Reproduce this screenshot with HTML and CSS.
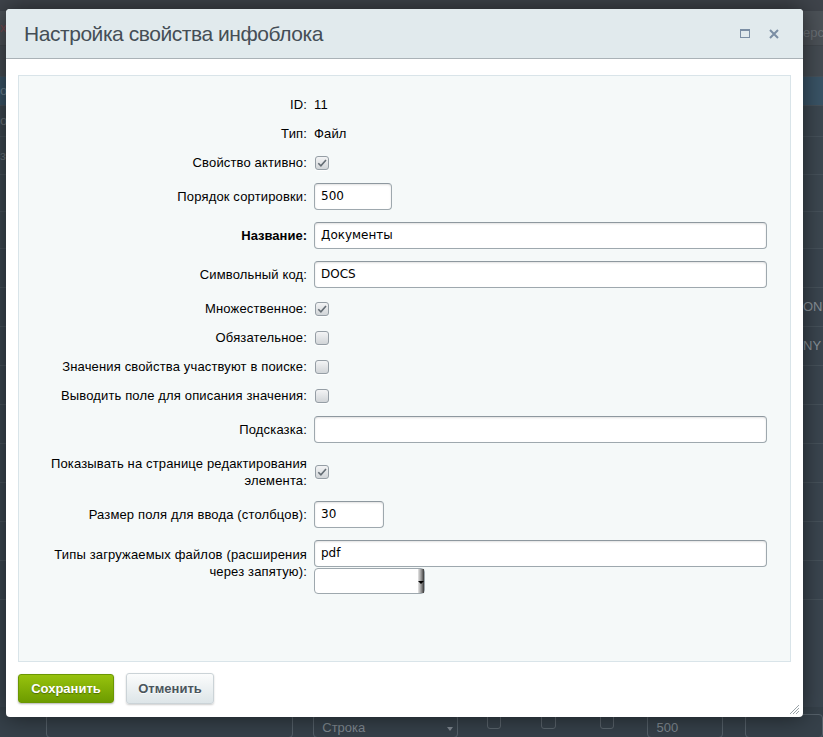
FILE: index.html
```html
<!DOCTYPE html>
<html lang="ru">
<head>
<meta charset="utf-8">
<title>Настройка свойства инфоблока</title>
<link rel="stylesheet" href="styles.css">
</head>
<body>
<div class="backdrop">
  <div class="bd-row bd-top"></div>
  <div class="bd-row bd-band"><span class="bd-x">x</span><span class="bd-ver">ерс</span></div>
  <div class="bd-row bd-r1"></div>
  <div class="bd-row bd-blue"><span class="bd-o">о</span></div>
  <div class="bd-row bd-r2"><span class="bd-o2">о</span></div>
  <div class="bd-row bd-r3"><span class="bd-o3">з</span></div>
  <div class="bd-row bd-r4"></div>
  <div class="bd-row bd-r4"></div>
  <div class="bd-row bd-r5"></div>
  <div class="bd-row bd-r5"><span class="bd-on">ON</span></div>
  <div class="bd-row bd-r5"><span class="bd-on">NY</span></div>
  <div class="bd-row bd-r5"></div>
  <div class="bd-row bd-r5"></div>
  <div class="bd-row bd-r5"></div>
  <div class="bd-row bd-r5"></div>
  <div class="bd-row bd-r5"></div>
  <div class="bd-row bd-r5"></div>
  <div class="bd-spacer"></div>
  <div class="bd-bottom">
    <div class="bd-field bd-f1"></div>
    <div class="bd-field bd-f2"><span>Строка</span><i class="bd-arrow"></i></div>
    <div class="bd-cb bd-cb1"></div>
    <div class="bd-cb bd-cb2"></div>
    <div class="bd-cb bd-cb3"></div>
    <div class="bd-field bd-f3"><span>500</span></div>
    <div class="bd-field bd-f4"></div>
  </div>
</div>

<div class="dialog">
  <div class="dlg-head">
    <span class="dlg-title">Настройка свойства инфоблока</span>
    <span class="dlg-icons">
      <svg class="ico-max" width="11" height="10" viewBox="0 0 11 10"><rect x="0.5" y="0.5" width="9" height="8" fill="none" stroke="#7b8ea4" stroke-width="1"/><line x1="0" y1="1" x2="10" y2="1" stroke="#7b8ea4" stroke-width="2"/></svg>
      <svg class="ico-close" width="10" height="10" viewBox="0 0 10 10"><path d="M1 1 L9 9 M9 1 L1 9" stroke="#7b8ea4" stroke-width="2"/></svg>
    </span>
  </div>
  <div class="dlg-body">
    <div class="panel">
      <div class="form">
        <div class="lbl">ID:</div><div class="val">11</div>
        <div class="lbl">Тип:</div><div class="val">Файл</div>
        <div class="lbl">Свойство активно:</div><div class="val"><span class="cb checked"><svg width="14" height="14" viewBox="0 0 14 14"><path d="M3.3 7.2 L5.9 9.8 L11 4" fill="none" stroke="#646d74" stroke-width="1.6"/></svg></span></div>
        <div class="lbl">Порядок сортировки:</div><div class="val"><div class="inp w77">500</div></div>
        <div class="lbl bold">Название:</div><div class="val"><div class="inp">Документы</div></div>
        <div class="lbl">Символьный код:</div><div class="val"><div class="inp">DOCS</div></div>
        <div class="lbl">Множественное:</div><div class="val"><span class="cb checked"><svg width="14" height="14" viewBox="0 0 14 14"><path d="M3.3 7.2 L5.9 9.8 L11 4" fill="none" stroke="#646d74" stroke-width="1.6"/></svg></span></div>
        <div class="lbl">Обязательное:</div><div class="val"><span class="cb"></span></div>
        <div class="lbl">Значения свойства участвуют в поиске:</div><div class="val"><span class="cb"></span></div>
        <div class="lbl">Выводить поле для описания значения:</div><div class="val"><span class="cb"></span></div>
        <div class="lbl">Подсказка:</div><div class="val"><div class="inp"></div></div>
        <div class="lbl">Показывать на странице редактирования элемента:</div><div class="val"><span class="cb checked"><svg width="14" height="14" viewBox="0 0 14 14"><path d="M3.3 7.2 L5.9 9.8 L11 4" fill="none" stroke="#646d74" stroke-width="1.6"/></svg></span></div>
        <div class="lbl">Размер поля для ввода (столбцов):</div><div class="val"><div class="inp w69">30</div></div>
        <div class="lbl top">Типы загружаемых файлов (расширения через запятую):</div>
        <div class="val stack"><div class="inp">pdf</div><div class="sel"><i class="sel-arrow"></i></div></div>
      </div>
    </div>
    <div class="buttons">
      <span class="btn btn-save">Сохранить</span>
      <span class="btn btn-cancel">Отменить</span>
    </div>
  </div>
  <svg class="grip" width="11" height="11" viewBox="0 0 11 11"><path d="M10 1 L1 10 M10 4 L4 10 M10 7 L7 10" stroke="#9aa3a8" stroke-width="1"/></svg>
</div>
</body>
</html>
```

FILE: styles.css
```css
html, body {
  margin: 0;
  padding: 0;
}
body {
  width: 823px;
  height: 737px;
  overflow: hidden;
  background: #3c4750;
  font-family: "Liberation Sans", Arial, sans-serif;
  position: relative;
}

/* ---------- backdrop (dimmed admin page) ---------- */
.backdrop {
  height: 737px;
  display: flex;
  flex-direction: column;
}
.bd-row {
  position: relative;
  border-bottom: 1px solid #47525b;
  color: #5f6a72;
  font-size: 13px;
}
.bd-top { height: 11px; background: #3f444b; border-bottom: none; }
.bd-band { height: 34px; background: #4c5258; border-bottom: 1px solid #41474d; }
.bd-x { position: absolute; left: 0; top: 9px; color: #7a4a4f; }
.bd-ver { position: absolute; left: 803px; top: 14px; color: #6a7076; font-size: 13px; }
.bd-r1 { height: 30px; background: #454c53; }
.bd-blue { height: 28px; background: #3a5467; }
.bd-o { position: absolute; left: 0; top: 6px; color: #6b8392; }
.bd-r2 { height: 30px; background: #3d4851; }
.bd-o2 { position: absolute; left: 0; top: 7px; color: #6a747b; }
.bd-r3 { height: 37px; background: #3d4851; }
.bd-o3 { position: absolute; left: 0; top: 11px; color: #6a747b; }
.bd-r4 { height: 36px; background: #3d4851; }
.bd-r5 { height: 38px; background: #3b4650; }
.bd-on { position: absolute; left: 803px; top: 11px; color: #8a939a; font-size: 13px; }
.bd-spacer { flex: 1; background: #3b4650; }
.bd-bottom {
  background: #36414a;
  display: flex;
  align-items: flex-start;
  padding-top: 7px;
  box-sizing: border-box;
  height: 30px;
  margin-top: -10px;
}
.bd-field {
  height: 24px;
  border: 1px solid #56616a;
  border-radius: 4px;
  box-sizing: border-box;
  color: #7f8890;
  font-size: 13px;
  padding: 5px 8px;
  position: relative;
}
.bd-f1 { margin-left: 46px; width: 254px; }
.bd-f2 { margin-left: 20px; width: 148px; }
.bd-f3 { margin-left: 33px; width: 77px; }
.bd-f4 { margin-left: 22px; width: 80px; }
.bd-arrow {
  position: absolute; right: 4px; top: 12px;
  border-left: 3px solid transparent; border-right: 3px solid transparent;
  border-top: 4px solid #7f8890;
}
.bd-cb {
  width: 13px; height: 13px;
  border: 1px solid #5a646c;
  border-radius: 3px;
}
.bd-cb1 { margin-left: 29px; }
.bd-cb2 { margin-left: 40px; }
.bd-cb3 { margin-left: 44px; }

/* ---------- dialog ---------- */
.dialog {
  position: absolute;
  left: 6px;
  top: 9px;
  width: 797px;
  height: 708px;
  background: #fff;
  border-radius: 4px;
  box-shadow: 0 0 25px rgba(0, 0, 0, 0.55);
  box-sizing: border-box;
  overflow: hidden;
}
.dlg-head {
  height: 49px;
  background: #e1eaed;
  border-bottom: 1px solid #aab2b7;
  display: flex;
  align-items: center;
  justify-content: space-between;
  padding: 0 24px 0 18px;
}
.dlg-title {
  font-size: 21px;
  color: #454e56;
  letter-spacing: -0.45px;
}
.dlg-icons {
  display: flex;
  align-items: center;
  gap: 18px;
  padding-top: 1px;
}
.ico-max { display: block; }
.ico-close { display: block; }

.dlg-body {
  padding: 16px 12px 0;
}
.panel {
  height: 587px;
  box-sizing: border-box;
  background: #f5f9f9;
  border: 1px solid #d9e4e9;
  padding-top: 14px;
}
.form {
  display: grid;
  grid-template-columns: 288px 453px;
  column-gap: 7px;
  align-items: center;
  font-size: 13px;
  line-height: 17px;
  color: #000;
}
.lbl {
  text-align: right;
  padding: 6px 0 6px 22px;
  letter-spacing: 0.15px;
}
.lbl.bold { font-weight: bold; letter-spacing: 0; }
.lbl.top { align-self: start; padding-top: 12px; }
.val {
  padding: 6px 0;
  display: flex;
  align-items: center;
  min-height: 17px;
  letter-spacing: 0.15px;
}
.val.stack {
  flex-direction: column;
  align-items: flex-start;
}
.inp {
  width: 100%;
  height: 27px;
  box-sizing: border-box;
  border: 1px solid #9ea8ae;
  border-top-color: #8e989f;
  border-radius: 4px;
  background: #fff;
  box-shadow: inset 0 1px 2px rgba(0, 0, 0, 0.12);
  font-family: "DejaVu Sans", Verdana, sans-serif;
  font-size: 12px;
  line-height: 25px;
  padding: 0 6px;
  color: #000;
  letter-spacing: 0;
}
.inp.w77 { width: 78px; }
.inp.w69 { width: 70px; }
.sel {
  margin-top: 1px;
  width: 111px;
  height: 26px;
  box-sizing: border-box;
  border: 1px solid #9ea8ae;
  border-radius: 4px;
  background: #fff;
  position: relative;
}
.sel-arrow {
  position: absolute;
  right: 0;
  top: 0;
  bottom: 0;
  width: 6px;
  background: linear-gradient(to right, #e6e6e6, #9a9a9a 50%, #3a3a3a);
}
.sel-arrow::after {
  content: "";
  position: absolute;
  left: 0;
  top: 12px;
  border-left: 3px solid transparent;
  border-right: 3px solid transparent;
  border-top: 3px solid #000;
}
.cb {
  width: 14px;
  height: 14px;
  box-sizing: border-box;
  margin-left: 1px;
  border: 1px solid #959ea5;
  border-radius: 3px;
  background: linear-gradient(#f3f4f5, #d1d5d8);
  box-shadow: 0 1px 0 rgba(255, 255, 255, 0.8);
  position: relative;
  display: block;
}
.cb svg {
  position: absolute;
  left: -1px;
  top: -1px;
}

/* ---------- buttons ---------- */
.buttons {
  display: flex;
  align-items: center;
  gap: 12px;
  margin-top: 11px;
}
.btn {
  display: inline-flex;
  align-items: center;
  justify-content: center;
  box-sizing: border-box;
  font-weight: bold;
  font-size: 13px;
  border-radius: 3px;
}
.btn-save {
  width: 96px;
  height: 29px;
  color: #fff;
  background: linear-gradient(#97c20d, #6d9c00);
  border: 1px solid #6b9702;
  text-shadow: 0 1px 1px rgba(0, 0, 0, 0.35);
  box-shadow: 0 1px 2px rgba(0, 0, 0, 0.3);
}
.btn-cancel {
  width: 88px;
  height: 31px;
  color: #4a555c;
  background: linear-gradient(#fbfcfc, #dde5e8);
  border: 1px solid #cbd3d7;
  box-shadow: 0 1px 2px rgba(0, 0, 0, 0.2);
  text-shadow: 0 1px 0 rgba(255, 255, 255, 0.8);
}

.grip {
  position: absolute;
  right: 3px;
  bottom: 2px;
}
```
